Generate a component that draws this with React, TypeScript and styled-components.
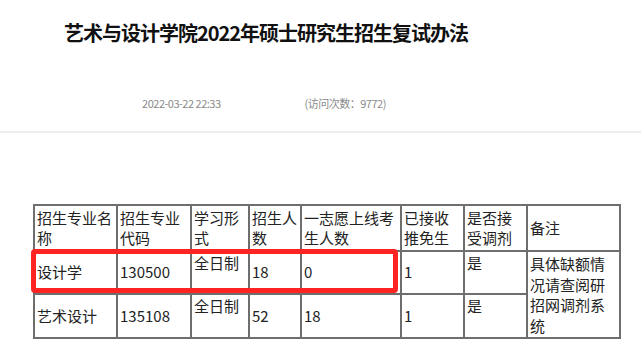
import React from 'react'
import styled, { createGlobalStyle } from 'styled-components'

type Row = {
    name: string;
    code: string;
    mode: string;
    quota: string;
    firstChoice: string;
    exempt: string;
    adjust: string;
}

const rows: Row[] = [
    { name: '设计学', code: '130500', mode: '全日制', quota: '18', firstChoice: '0', exempt: '1', adjust: '是' },
    { name: '艺术设计', code: '135108', mode: '全日制', quota: '52', firstChoice: '18', exempt: '1', adjust: '是' },
];

const headers = ['招生专业名称', '招生专业代码', '学习形式', '招生人数', '一志愿上线考生人数', '已接收推免生', '是否接受调剂', '备注'];
const colWidths = [83, 74, 58, 52, 100, 63, 63, 93];

const GlobalStyle = createGlobalStyle`
    body {
        margin: 0;
        background: #fff;
        font-family: "Noto Sans CJK SC", "Noto Sans", sans-serif;
    }
`

const Page = styled.div`
    width: 641px;
    height: 344px;
    overflow: hidden;
`

const Header = styled.header`
    width: 532px;
    display: flex;
    flex-direction: column;
    align-items: center;
    padding-top: 18px;
`

const Title = styled.h1`
    margin: 0;
    font-size: 20px;
    line-height: 30px;
    font-weight: 700;
    color: #111;
    letter-spacing: -1px;
`

const Meta = styled.div`
    display: flex;
    gap: 84px;
    margin-top: 47px;
    margin-right: 4px;
    font-size: 11px;
    line-height: 16px;
    letter-spacing: -0.5px;
    color: #8a8a8a;
`

const Divider = styled.hr`
    margin: 20px 0 0;
    border: none;
    height: 2px;
    background: #eee;
`

const TableWrap = styled.div`
    position: relative;
    margin: 71px 0 0 33px;
    width: 586px;
`

const Table = styled.table`
    border-collapse: collapse;
    table-layout: fixed;
    width: 586px;
    font-size: 15px;
    line-height: 20px;
    color: #222;
`

const Cell = styled.td<{ $top?: boolean }>`
    border: 2px solid #6e6e6e;
    padding: 1px 2px;
    vertical-align: ${p => (p.$top ? 'top' : 'middle')};
    text-align: left;
    word-break: break-all;
`

const Remark = styled(Cell)`
    line-height: 20.5px;
    padding-top: 2px;
`

const HeadRow = styled.tr`
    height: 46px;
`

const BodyRow = styled.tr<{ $h: number }>`
    height: ${p => p.$h}px;
`

const Highlight = styled.div`
    position: absolute;
    left: -2px;
    top: 45px;
    width: 367px;
    height: 44px;
    box-sizing: border-box;
    border: 5px solid #ff2424;
    border-radius: 4px;
    pointer-events: none;
`

export default function App() {
    return <Page>
        <GlobalStyle />
        <Header>
            <Title>艺术与设计学院2022年硕士研究生招生复试办法</Title>
            <Meta>
                <span>2022-03-22 22:33</span>
                <span>(访问次数：9772)</span>
            </Meta>
        </Header>
        <Divider />
        <TableWrap>
            <Table>
                <colgroup>
                    {colWidths.map((w, i) => <col key={i} style={{ width: w }} />)}
                </colgroup>
                <tbody>
                    <HeadRow>
                        {headers.map(h => <Cell key={h}>{h}</Cell>)}
                    </HeadRow>
                    {rows.map((r, i) => <BodyRow key={r.code} $h={i === 0 ? 42 : 43}>
                        <Cell>{r.name}</Cell>
                        <Cell>{r.code}</Cell>
                        <Cell $top>{r.mode}</Cell>
                        <Cell>{r.quota}</Cell>
                        <Cell>{r.firstChoice}</Cell>
                        <Cell>{r.exempt}</Cell>
                        <Cell $top>{r.adjust}</Cell>
                        {i === 0 && <Remark $top rowSpan={2}>具体缺额情况请查阅研招网调剂系统</Remark>}
                    </BodyRow>)}
                </tbody>
            </Table>
            <Highlight />
        </TableWrap>
    </Page>
}
